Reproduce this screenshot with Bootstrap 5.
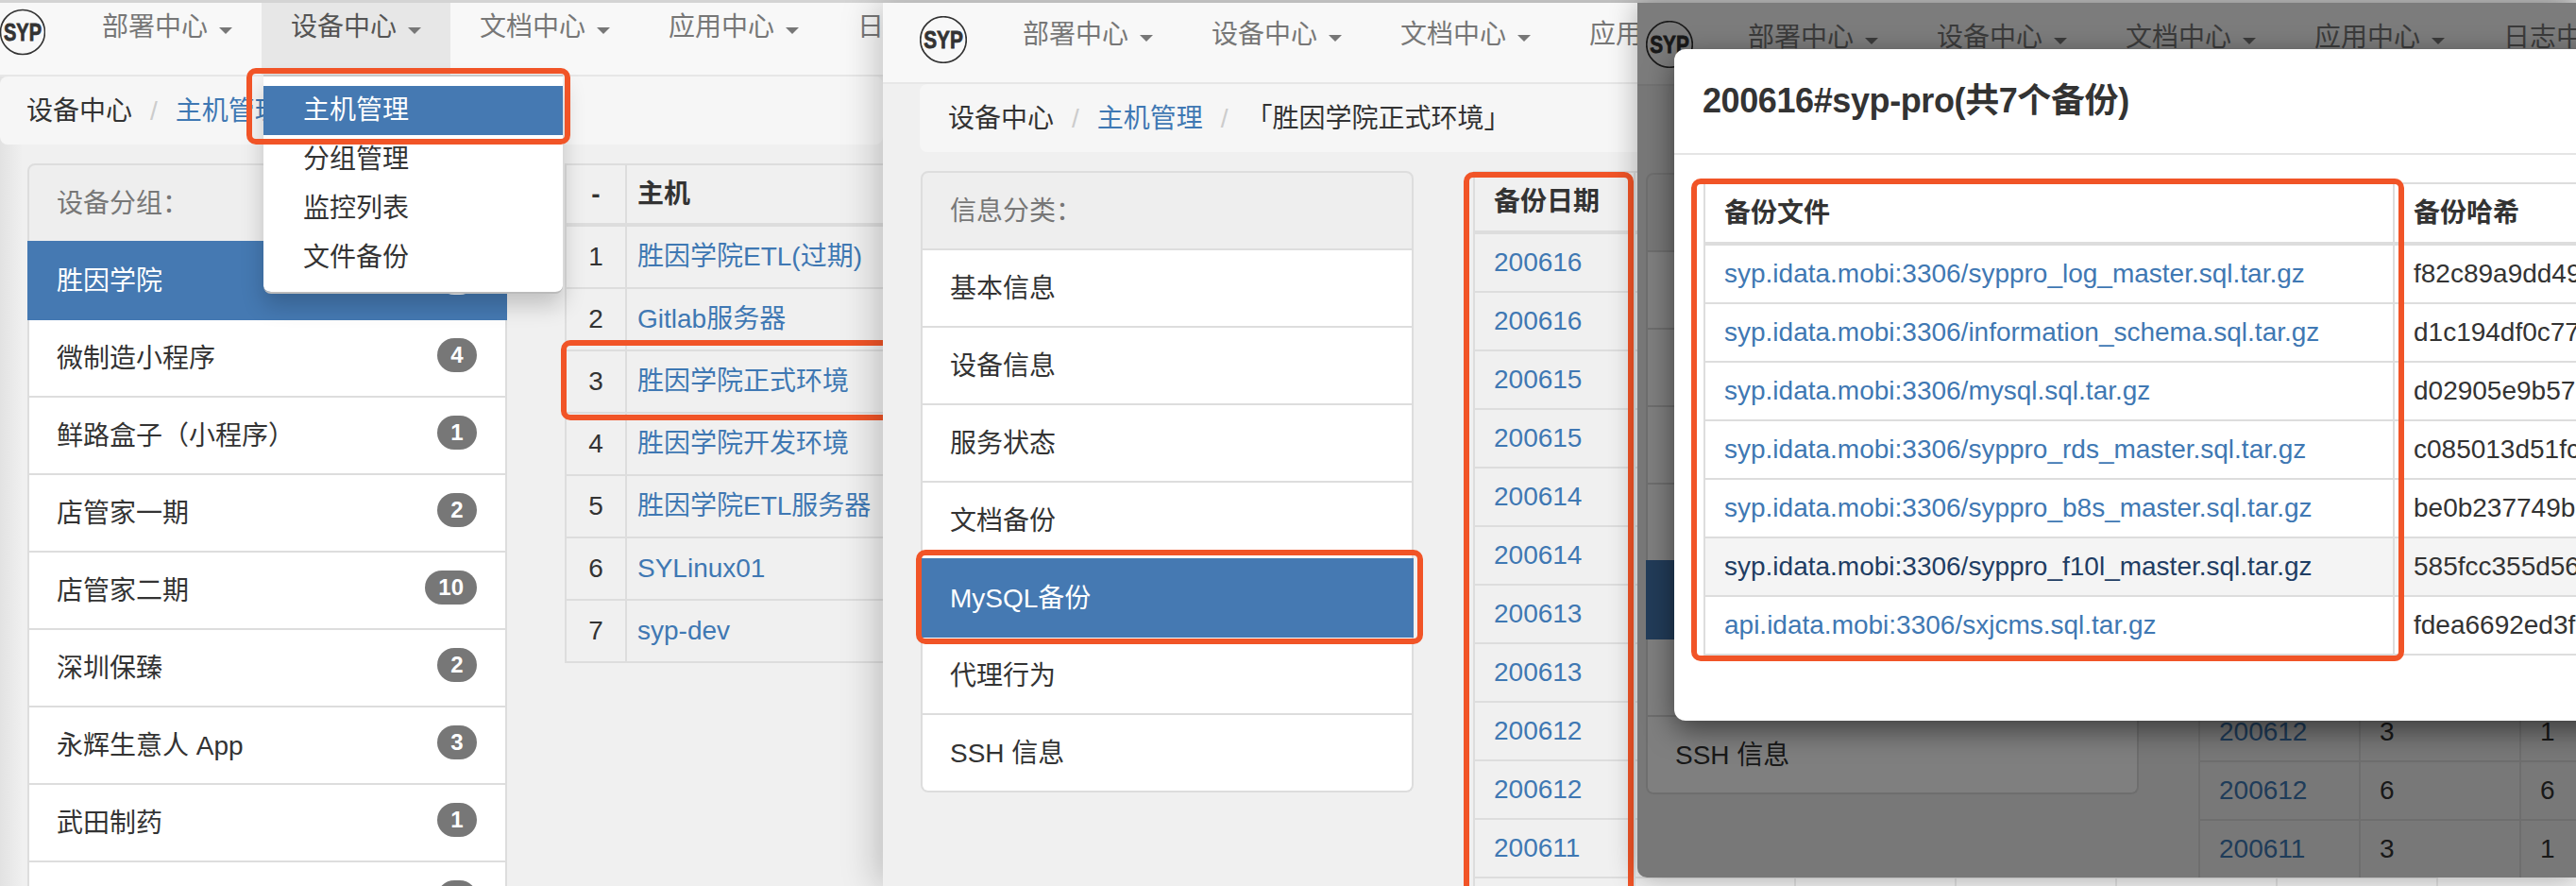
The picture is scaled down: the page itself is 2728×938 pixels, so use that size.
<!DOCTYPE html>
<html lang="zh-CN">
  <head>
    <meta charset="UTF-8" />
    <title>SYP 设备中心</title>
    <link
      href="https://cdn.jsdelivr.net/npm/bootstrap@5.3.3/dist/css/bootstrap.min.css"
      rel="stylesheet"
      crossorigin="anonymous"
    />
    <style>
      html, body { margin: 0; height: 100%; overflow: hidden; background: #d4d4d4; }
      body {
        font-family: "Liberation Sans", "Noto Sans CJK SC", sans-serif;
        font-size: 28px; line-height: 40px; color: #333;
      }
      a { color: #3f78b3; text-decoration: none; }

      /* three browser windows lying on a desktop */
      .shot-win { position: absolute; top: 3px; bottom: 0; overflow: hidden; background: #f0f0f0; }
      #win-hosts { left: 0; width: 935px; z-index: 1; background: linear-gradient(90deg, #e2e2e2, #f0f0f0 24px); }
      #win-info { left: 935px; width: 1793px; z-index: 2; box-shadow: -6px 0 36px rgba(0,0,0,.22); }
      #win-modal {
        left: 1734px; right: 0; bottom: 9px; z-index: 3;
        border-bottom-left-radius: 10px;
        box-shadow: 0 0 30px rgba(0,0,0,.3);
      }
      .win-shade { position: absolute; inset: 0; background: rgba(0,0,0,.5); z-index: 5; }

      /* navbar */
      .top-bar { --bs-navbar-padding-x: 0; --bs-navbar-padding-y: 0; --bs-navbar-nav-link-padding-x: 31px; background: #f8f8f8; border-bottom: 2px solid #e7e7e7; align-items: stretch; justify-content: flex-start !important; flex-wrap: nowrap; }
      .top-bar .navbar-brand { margin: 0; padding: 0; display: flex; align-items: flex-start; flex-shrink: 0; }
      .top-bar .navbar-nav { flex-wrap: nowrap; flex-shrink: 0; }
      .top-bar .nav-link, .top-bar .nav-link.show { padding-bottom: 0; color: #777; font-size: 28px; line-height: 40px; height: 100%; white-space: nowrap; }
      .top-bar .nav-link.show { background: #e7e7e7; color: #555; }
      .top-bar .dropdown-toggle::after { border-width: 7.5px 7px 0; margin-left: 12px; vertical-align: 2px; color: #777; }
      .logo-ring { display: block; }

      #win-hosts .top-bar { height: 78px; }
      #win-hosts .navbar-brand { width: 77px; padding-top: 6px; }
      #win-hosts .nav-link { padding-top: 6px; }
      #win-info .top-bar { height: 86px; }
      #win-info .navbar-brand { width: 117px; padding-left: 39px; padding-top: 14px; }
      #win-info .nav-link { padding-top: 14px; }
      #win-modal .top-bar { height: 88px; }
      #win-modal .navbar-brand { width: 86px; padding-left: 9px; padding-top: 19px; }
      #win-modal .nav-link { padding-top: 17px; }

      /* host manage dropdown */
      .top-bar .menu-open {
        --bs-dropdown-min-width: 317px; --bs-dropdown-padding-y: 10px; --bs-dropdown-border-radius: 0 0 8px 8px;
        --bs-dropdown-border-width: 0; --bs-dropdown-item-padding-x: 42px; --bs-dropdown-item-padding-y: 6px;
        --bs-dropdown-link-active-bg: #4579b2; --bs-dropdown-link-color: #333; --bs-dropdown-font-size: 28px;
        margin: 0; left: 2px; top: 76px; width: 317px;
        border-top: 2px solid #c8c8c8; border-bottom: 2px solid #bbb; box-shadow: 0 12px 24px rgba(0,0,0,.2);
      }

      /* breadcrumb */
      .path-bar { --bs-breadcrumb-bg: #f6f6f6; --bs-breadcrumb-padding-y: 16px; --bs-breadcrumb-margin-bottom: 20px; --bs-breadcrumb-border-radius: 8px; --bs-breadcrumb-item-padding-x: 19px; --bs-breadcrumb-divider-color: #ccc; --bs-breadcrumb-item-active-color: #333; padding-top: 17px; padding-bottom: 15px; flex-wrap: nowrap; white-space: nowrap; }
      #win-hosts .path-bar { --bs-breadcrumb-padding-x: 28px; }
      #win-info .path-bar { --bs-breadcrumb-padding-x: 30px; margin-left: 39px; }
      #win-modal .path-bar { --bs-breadcrumb-padding-x: 30px; margin-left: 39px; }

      /* side list */
      .side-list { --bs-list-group-border-width: 2px; --bs-list-group-border-color: #ddd; --bs-list-group-border-radius: 8px; --bs-list-group-item-padding-x: 30px; --bs-list-group-item-padding-y: 20px; --bs-list-group-color: #333; --bs-list-group-active-bg: #4579b2; --bs-list-group-active-border-color: #4579b2; flex-shrink: 0; }
      .side-list .list-group-item { padding-top: 21px; padding-bottom: 19px; padding-left: 29px; }
      .side-head { background: #eeeeee; color: #777; }
      .num-pill { --bs-badge-padding-x: 14px; --bs-badge-padding-y: 0; --bs-badge-font-size: 24px; --bs-badge-border-radius: 18px; --bs-badge-color: #fff; background: #777; line-height: 36px; min-width: 42px; height: 36px; margin-top: -8px; }
      .side-list .active .num-pill { background: #fff; color: #4579b2; }
      #win-hosts .side-list { width: 508px; }
      #win-info .side-list, #win-modal .side-list { width: 522px; }

      .page-flow { display: flex; align-items: flex-start; }
      #win-hosts .page-flow { padding-left: 29px; gap: 61px; }
      #win-info .page-flow { padding-left: 40px; gap: 63px; }
      #win-modal .page-flow { padding-left: 9px; gap: 63px; }

      /* tables */
      .grid-table { --bs-table-bg: transparent; --bs-table-border-color: #ddd; --bs-table-color: #333; --bs-border-width: 2px; margin: 0; width: auto; table-layout: fixed; flex-shrink: 0; }
      .grid-table > :not(caption) > * > * { padding: 10px 20px; white-space: nowrap; border-width: 2px; }
      .grid-table.table > thead:not(:last-child) > tr:last-child > th { border-bottom-width: 4px; border-bottom-color: #ddd; height: 64px; }
      .grid-table > tbody > tr > td { height: 62px; }
      .grid-table.table > thead { border-bottom: 0; }
      #tbl-hosts { width: 900px; }
      #tbl-hosts > :not(caption) > * > * { padding: 10px 11px; }
      #tbl-hosts > tbody > tr > td { padding: 12px 11px; height: 66px; }
      #tbl-hosts .num-col { width: 64px; text-align: center; }
      .date-table { width: 1020px; }
      .date-table th, .date-table td { width: 170px; }
      .modal-files { width: 1300px; }
      .modal-files .file-col { width: 730px; }
      .modal-files .hover-row > td { background: #f4f4f4; }
      .modal-files .hover-row a { color: #1f3d63; }

      /* dialog */
      .backup-dialog { position: absolute; left: 39px; top: 49px; width: 1300px; height: 711px; z-index: 10; border: 0; border-radius: 12px; background: #fff; box-shadow: 0 10px 30px rgba(0,0,0,.5); display: block; }
      .backup-dialog .modal-header { height: 112px; padding: 0 30px; border-bottom: 2px solid #e5e5e5; }
      .backup-dialog .modal-title { font-size: 36px; line-height: 44px; font-weight: 700; letter-spacing: -.4px; color: #333; }
      .backup-dialog .modal-body { padding: 29px 31px; }

      /* hand drawn red marks over the screenshot */
      .red-mark { position: absolute; border: 6px solid #f15427; border-radius: 10px; z-index: 1100; }
      #mark-menu { left: 261px; top: 69px; width: 343px; height: 81px; }
      #mark-row { left: 594px; top: 357px; width: 500px; height: 85px; }
      #mark-mysql { left: 35px; top: 579px; width: 537px; height: 100px; }
      #mark-dates { left: 615px; top: 179px; width: 180px; height: 900px; }
      #mark-files { left: 57px; top: 186px; width: 755px; height: 511px; }
    </style>
  </head>
  <body>
    <!-- Window 1: host list with open menu -->
    <div class="shot-win" id="win-hosts">
      <nav class="navbar navbar-expand top-bar">
        <a class="navbar-brand" href="#">
          <svg class="logo-ring" width="48" height="50" viewBox="0 0 48 50"><circle cx="24" cy="25" r="23.5" fill="none" stroke="#333" stroke-width="1.6"/><text x="24" y="34" text-anchor="middle" font-family="Liberation Sans" font-weight="700" font-size="25" textLength="40" lengthAdjust="spacingAndGlyphs" fill="#333" stroke="#333" stroke-width=".8">SYP</text></svg>
        </a>
        <ul class="navbar-nav">
          <li class="nav-item dropdown"><a class="nav-link dropdown-toggle" href="#">部署中心</a></li>
          <li class="nav-item dropdown">
            <a class="nav-link dropdown-toggle show" href="#">设备中心</a>
            <ul class="dropdown-menu show menu-open">
              <li><a class="dropdown-item active" href="#">主机管理</a></li>
              <li><a class="dropdown-item" href="#">分组管理</a></li>
              <li><a class="dropdown-item" href="#">监控列表</a></li>
              <li><a class="dropdown-item" href="#">文件备份</a></li>
            </ul>
          </li>
          <li class="nav-item dropdown"><a class="nav-link dropdown-toggle" href="#">文档中心</a></li>
          <li class="nav-item dropdown"><a class="nav-link dropdown-toggle" href="#">应用中心</a></li>
          <li class="nav-item dropdown"><a class="nav-link dropdown-toggle" href="#">日志中心</a></li>
        </ul>
      </nav>
      <ol class="breadcrumb path-bar">
        <li class="breadcrumb-item active">设备中心</li>
        <li class="breadcrumb-item"><a href="#">主机管理</a></li>
      </ol>
      <div class="page-flow">
        <ul class="list-group side-list">
          <li class="list-group-item side-head">设备分组：</li>
          <li class="list-group-item active d-flex justify-content-between align-items-center">胜因学院<span class="badge num-pill">7</span></li>
          <li class="list-group-item d-flex justify-content-between align-items-center">微制造小程序<span class="badge num-pill">4</span></li>
          <li class="list-group-item d-flex justify-content-between align-items-center">鲜路盒子（小程序）<span class="badge num-pill">1</span></li>
          <li class="list-group-item d-flex justify-content-between align-items-center">店管家一期<span class="badge num-pill">2</span></li>
          <li class="list-group-item d-flex justify-content-between align-items-center">店管家二期<span class="badge num-pill">10</span></li>
          <li class="list-group-item d-flex justify-content-between align-items-center">深圳保臻<span class="badge num-pill">2</span></li>
          <li class="list-group-item d-flex justify-content-between align-items-center">永辉生意人 App<span class="badge num-pill">3</span></li>
          <li class="list-group-item d-flex justify-content-between align-items-center">武田制药<span class="badge num-pill">1</span></li>
          <li class="list-group-item d-flex justify-content-between align-items-center">&nbsp;<span class="badge num-pill">2</span></li>
        </ul>
        <table class="table table-bordered grid-table" id="tbl-hosts">
          <thead><tr><th class="num-col">-</th><th>主机</th></tr></thead>
          <tbody>
            <tr><td class="num-col">1</td><td><a href="#">胜因学院ETL(过期)</a></td></tr>
            <tr><td class="num-col">2</td><td><a href="#">Gitlab服务器</a></td></tr>
            <tr><td class="num-col">3</td><td><a href="#">胜因学院正式环境</a></td></tr>
            <tr><td class="num-col">4</td><td><a href="#">胜因学院开发环境</a></td></tr>
            <tr><td class="num-col">5</td><td><a href="#">胜因学院ETL服务器</a></td></tr>
            <tr><td class="num-col">6</td><td><a href="#">SYLinux01</a></td></tr>
            <tr><td class="num-col">7</td><td><a href="#">syp-dev</a></td></tr>
          </tbody>
        </table>
      </div>
      <div class="red-mark" id="mark-menu"></div>
      <div class="red-mark" id="mark-row"></div>
    </div>

    <!-- Window 2: host info, backup dates -->
    <div class="shot-win" id="win-info">
      <nav class="navbar navbar-expand top-bar">
        <a class="navbar-brand" href="#">
          <svg class="logo-ring" width="50" height="50" viewBox="0 0 48 48"><circle cx="24" cy="24" r="23.3" fill="none" stroke="#333" stroke-width="1.6"/><text x="24" y="33" text-anchor="middle" font-family="Liberation Sans" font-weight="700" font-size="25" textLength="40" lengthAdjust="spacingAndGlyphs" fill="#333" stroke="#333" stroke-width=".8">SYP</text></svg>
        </a>
        <ul class="navbar-nav">
          <li class="nav-item dropdown"><a class="nav-link dropdown-toggle" href="#">部署中心</a></li>
          <li class="nav-item dropdown"><a class="nav-link dropdown-toggle" href="#">设备中心</a></li>
          <li class="nav-item dropdown"><a class="nav-link dropdown-toggle" href="#">文档中心</a></li>
          <li class="nav-item dropdown"><a class="nav-link dropdown-toggle" href="#">应用中心</a></li>
        </ul>
      </nav>
      <ol class="breadcrumb path-bar">
        <li class="breadcrumb-item active">设备中心</li>
        <li class="breadcrumb-item"><a href="#">主机管理</a></li>
        <li class="breadcrumb-item active">「胜因学院正式环境」</li>
      </ol>
      <div class="page-flow">
        <ul class="list-group side-list">
          <li class="list-group-item side-head">信息分类：</li>
          <li class="list-group-item">基本信息</li>
          <li class="list-group-item">设备信息</li>
          <li class="list-group-item">服务状态</li>
          <li class="list-group-item">文档备份</li>
          <li class="list-group-item active">MySQL备份</li>
          <li class="list-group-item">代理行为</li>
          <li class="list-group-item">SSH 信息</li>
        </ul>
        <table class="table table-bordered grid-table date-table">
          <thead><tr><th>备份日期</th><th></th><th></th><th></th><th></th><th></th></tr></thead>
          <tbody id="date-rows"></tbody>
        </table>
      </div>
      <div class="red-mark" id="mark-mysql"></div>
      <div class="red-mark" id="mark-dates"></div>
    </div>

    <!-- Window 3: backup dialog over a dimmed page -->
    <div class="shot-win" id="win-modal">
      <nav class="navbar navbar-expand top-bar">
        <a class="navbar-brand" href="#">
          <svg class="logo-ring" width="50" height="50" viewBox="0 0 48 48"><circle cx="24" cy="24" r="23.3" fill="none" stroke="#333" stroke-width="1.6"/><text x="24" y="33" text-anchor="middle" font-family="Liberation Sans" font-weight="700" font-size="25" textLength="40" lengthAdjust="spacingAndGlyphs" fill="#333" stroke="#333" stroke-width=".8">SYP</text></svg>
        </a>
        <ul class="navbar-nav">
          <li class="nav-item dropdown"><a class="nav-link dropdown-toggle" href="#">部署中心</a></li>
          <li class="nav-item dropdown"><a class="nav-link dropdown-toggle" href="#">设备中心</a></li>
          <li class="nav-item dropdown"><a class="nav-link dropdown-toggle" href="#">文档中心</a></li>
          <li class="nav-item dropdown"><a class="nav-link dropdown-toggle" href="#">应用中心</a></li>
          <li class="nav-item dropdown"><a class="nav-link dropdown-toggle" href="#">日志中心</a></li>
        </ul>
      </nav>
      <ol class="breadcrumb path-bar">
        <li class="breadcrumb-item active">设备中心</li>
      </ol>
      <div class="page-flow">
        <ul class="list-group side-list">
          <li class="list-group-item side-head">信息分类：</li>
          <li class="list-group-item">基本信息</li>
          <li class="list-group-item">设备信息</li>
          <li class="list-group-item">服务状态</li>
          <li class="list-group-item">文档备份</li>
          <li class="list-group-item active">MySQL备份</li>
          <li class="list-group-item">代理行为</li>
          <li class="list-group-item">SSH 信息</li>
        </ul>
        <table class="table table-bordered grid-table date-table">
          <thead><tr><th></th><th></th><th></th><th></th><th></th><th></th></tr></thead>
          <tbody id="dim-rows"></tbody>
        </table>
      </div>
      <div class="win-shade"></div>
      <div class="modal-content backup-dialog">
        <div class="modal-header"><h4 class="modal-title">200616#syp-pro(共7个备份)</h4></div>
        <div class="modal-body">
          <table class="table table-bordered grid-table modal-files">
            <thead><tr><th class="file-col">备份文件</th><th>备份哈希</th></tr></thead>
            <tbody id="file-rows"></tbody>
          </table>
        </div>
      </div>
      <div class="red-mark" id="mark-files"></div>
    </div>

    <script
      src="https://cdn.jsdelivr.net/npm/bootstrap@5.3.3/dist/js/bootstrap.bundle.min.js"
      crossorigin="anonymous"
    ></script>
    <script>
      const dates = ["200616","200616","200615","200615","200614","200614","200613","200613","200612","200612","200611","200611"];
      const files = [
        ["syp.idata.mobi:3306/syppro_log_master.sql.tar.gz", "f82c89a9dd49"],
        ["syp.idata.mobi:3306/information_schema.sql.tar.gz", "d1c194df0c77"],
        ["syp.idata.mobi:3306/mysql.sql.tar.gz", "d02905e9b57"],
        ["syp.idata.mobi:3306/syppro_rds_master.sql.tar.gz", "c085013d51fc"],
        ["syp.idata.mobi:3306/syppro_b8s_master.sql.tar.gz", "be0b237749b"],
        ["syp.idata.mobi:3306/syppro_f10l_master.sql.tar.gz", "585fcc355d56"],
        ["api.idata.mobi:3306/sxjcms.sql.tar.gz", "fdea6692ed3f"],
      ];
      // numbers of the dimmed table, only the last rows show under the dialog
      const dimCounts = { 8: [3, 1], 9: [6, 6], 10: [3, 1] };

      // Date table in window 2, empty columns run on under window 3
      document.getElementById("date-rows").innerHTML = dates
        .map((d) => `<tr><td><a href="#">${d}</a></td><td></td><td></td><td></td><td></td><td></td></tr>`)
        .join("");

      // Same table dimmed in window 3
      document.getElementById("dim-rows").innerHTML = dates.slice(0, 11)
        .map((d, i) => {
          const c = dimCounts[i] || ["", ""];
          return `<tr><td>${i > 7 ? `<a href="#">${d}</a>` : ""}</td><td>${c[0]}</td><td>${c[1]}</td><td></td><td></td><td></td></tr>`;
        })
        .join("");

      // Dialog rows
      document.getElementById("file-rows").innerHTML = files
        .map((f, i) => `<tr class="${i === 5 ? "hover-row" : ""}"><td><a href="#">${f[0]}</a></td><td>${f[1]}</td></tr>`)
        .join("");
    </script>
  </body>
</html>
